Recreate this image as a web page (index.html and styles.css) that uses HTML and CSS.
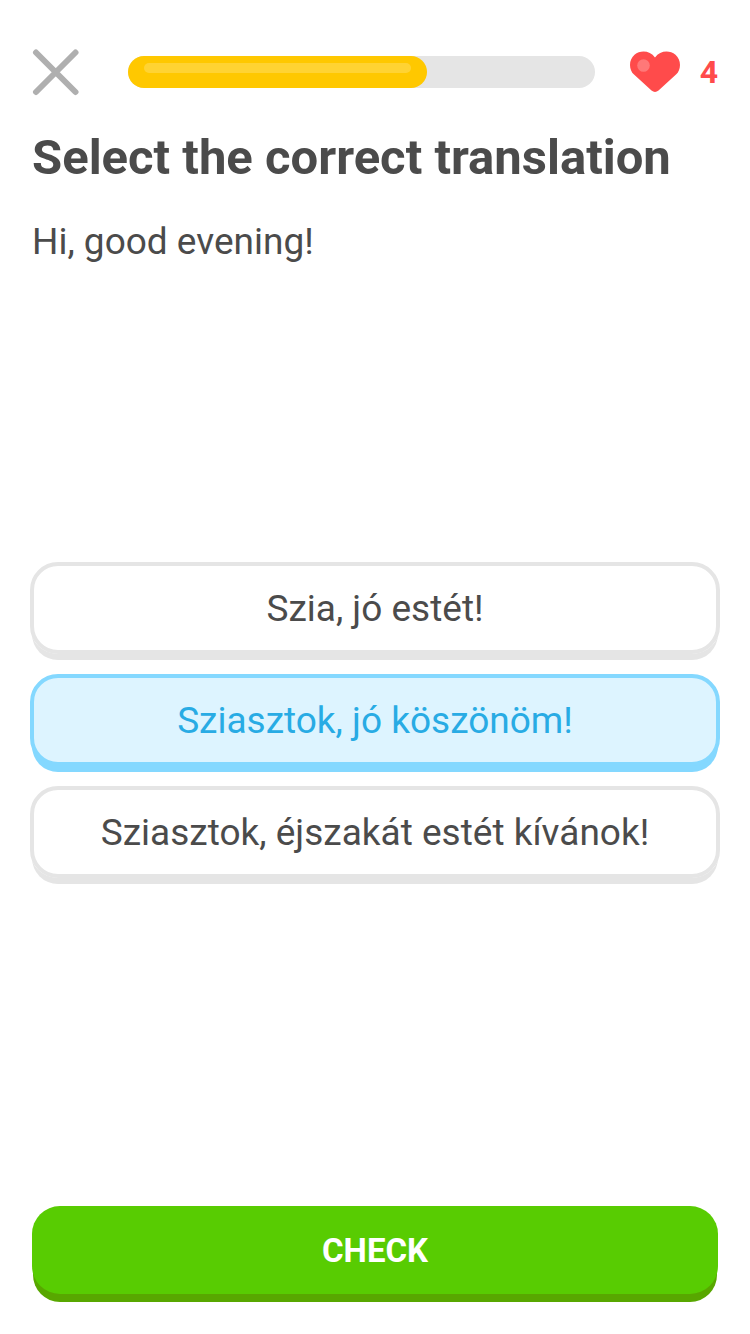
FILE: index.html
```html
<!DOCTYPE html>
<html lang="en">
<head>
<meta charset="utf-8">
<meta name="viewport" content="width=device-width, initial-scale=1">
<title>Select the correct translation</title>
<link rel="stylesheet" href="styles.css">
</head>
<body>
<form class="lesson">
  <header class="topbar">
    <button class="close" type="button" aria-label="Close">
      <svg width="48" height="48" viewBox="0 0 48 48" aria-hidden="true"><path d="M4 4.500 43.500 44M43.500 4.500 4 44" fill="none" stroke="#afafaf" stroke-width="6" stroke-linecap="round"/></svg>
    </button>
    <div class="progress" role="progressbar" aria-label="Lesson progress" aria-valuemin="0" aria-valuemax="100" aria-valuenow="64">
      <div class="progress-fill" style="width: 64%"><div class="progress-shine"></div></div>
    </div>
    <div class="hearts">
      <svg width="52" height="42" viewBox="0 0 52 42" aria-hidden="true"><path d="M26 6.500C31-.5 40.500-1.200 46.500 3.800 52.500 9 52.300 18.500 47 23.600L29.500 39.600Q26 42.400 22.500 39.600L5 23.600C-.3 18.500-.5 9 5.500 3.800 11.500-1.200 21-.5 26 6.500Z" fill="#ff4b4b"/><circle cx="14.500" cy="14.500" r="6.300" fill="#ff7878"/></svg>
      <span>4</span>
    </div>
  </header>
  <h1 class="title">Select the correct translation</h1>
  <p class="prompt">Hi, good evening!</p>
  <div class="options" role="radiogroup" aria-label="Translations" lang="hu">
    <label class="option"><input class="option-input" type="radio" name="answer">Szia, jó estét!</label>
    <label class="option"><input class="option-input" type="radio" name="answer" checked>Sziasztok, jó köszönöm!</label>
    <label class="option"><input class="option-input" type="radio" name="answer">Sziasztok, éjszakát estét kívánok!</label>
  </div>
  <button class="check" type="button">CHECK</button>
</form>
</body>
</html>
```
FILE: styles.css
```css
* {
  box-sizing: border-box;
}

body {
  margin: 0;
  background: #fff;
  color: #4b4b4b;
  font-family: Roboto, "Noto Sans", sans-serif;
}

.lesson {
  display: flex;
  flex-direction: column;
  min-height: 100vh;
  padding: 48px 32px 40px;
}

.topbar {
  display: flex;
  align-items: center;
}

.close {
  display: flex;
  padding: 0;
  border: 0;
  background: none;
  cursor: pointer;
}

.progress {
  flex: 1;
  height: 32px;
  margin: 0 34px 0 48px;
  border-radius: 16px;
  background: #e5e5e5;
}

.progress-fill {
  height: 100%;
  padding: 7px 16px;
  border-radius: 16px;
  background: #ffc800;
}

.progress-shine {
  height: 10px;
  border-radius: 5px;
  background: #ffd333;
}

.hearts {
  display: flex;
  align-items: center;
  gap: 19px;
  color: #ff4b4b;
  font-size: 32px;
  font-weight: 700;
}

.title {
  margin: 34px 0 0;
  font-size: 49px;
  line-height: 56px;
  font-weight: 700;
}

.prompt {
  margin: 34px 0 0;
  font-size: 37px;
  line-height: 44px;
}

.options {
  flex: 1;
  display: flex;
  flex-direction: column;
  justify-content: center;
  gap: 20px;
  margin: 0 -2px;
  padding-bottom: 31px;
}

.option {
  position: relative;
  display: flex;
  align-items: center;
  justify-content: center;
  min-height: 92px;
  padding: 10px 24px 8px;
  border: 4px solid #e5e5e5;
  border-radius: 28px;
  box-shadow: 0 8px 0 -2px #e5e5e5;
  font-size: 37px;
  line-height: 44px;
  text-align: center;
  cursor: pointer;
}

.option:has(:checked) {
  border-color: #84d8ff;
  background: #ddf4ff;
  box-shadow: 0 8px 0 -2px #84d8ff;
  color: #28abe4;
}

.option-input {
  position: absolute;
  inset: 0;
  margin: 0;
  opacity: 0;
  cursor: pointer;
}

.check {
  min-height: 88px;
  border: 0;
  border-radius: 28px;
  background: #58cc02;
  box-shadow: 0 9px 0 -1px #58a700;
  color: #fff;
  font-family: inherit;
  font-size: 33px;
  font-weight: 700;
  cursor: pointer;
}
```
